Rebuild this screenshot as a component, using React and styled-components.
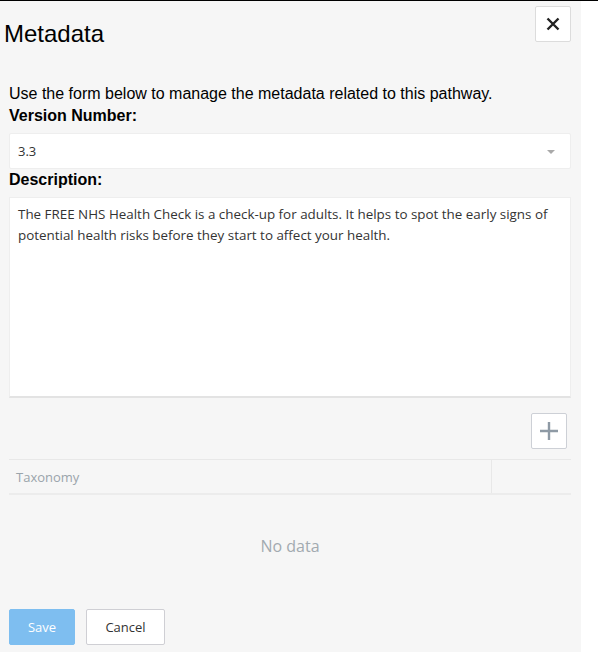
import React from 'react';
import styled, { createGlobalStyle } from 'styled-components';

const GlobalStyle = createGlobalStyle`
  html, body {
    margin: 0;
    padding: 0;
    background: #ffffff;
  }
  * {
    box-sizing: border-box;
  }
`;

const Page = styled.div`
  border-top: 1px solid #000;
  width: 598px;
  height: 652px;
  overflow: hidden;
`;

const Panel = styled.div`
  width: 581px;
  height: 651px;
  background: #f6f6f6;
  padding: 0 10px 0 9px;
  display: flex;
  flex-direction: column;
`;

const Header = styled.div`
  display: flex;
  justify-content: space-between;
  align-items: flex-start;
  margin-left: -5px;
`;

const Title = styled.h1`
  margin: 19px 0 0;
  font-family: "Liberation Sans", Arial, sans-serif;
  font-size: 24px;
  font-weight: normal;
  line-height: 28px;
  color: #000;
`;

const IconButton = styled.button`
  width: ${(p) => p.size}px;
  height: ${(p) => p.size}px;
  margin-top: ${(p) => p.top}px;
  padding: 0;
  background: #fff;
  border: 1px solid ${(p) => p.border};
  border-radius: 2px;
  display: flex;
  align-items: center;
  justify-content: center;
  cursor: pointer;
`;

const Intro = styled.p`
  margin: 35px 0 0;
  font-family: "Liberation Sans", Arial, sans-serif;
  font-size: 16px;
  line-height: 22px;
  color: #000;
`;

const Label = styled.label`
  display: block;
  margin-bottom: 6px;
  font-family: "Liberation Sans", Arial, sans-serif;
  font-size: 16px;
  font-weight: bold;
  line-height: 22px;
  color: #000;
`;

const Select = styled.div`
  height: 36px;
  background: #fff;
  border: 1px solid #eeeeee;
  border-radius: 2px;
  display: flex;
  align-items: center;
  justify-content: space-between;
  padding: 0 15px 0 8px;
  font-family: "Open Sans", "Noto Sans", sans-serif;
  font-size: 13px;
  color: #333;
`;

const Caret = styled.span`
  width: 0;
  height: 0;
  border-left: 4px solid transparent;
  border-right: 4px solid transparent;
  border-top: 4px solid #a9a9a9;
  margin-top: 2px;
`;

const TextArea = styled.div`
  height: 201px;
  background: #fff;
  border: 1px solid #eeeeee;
  border-bottom: 2px solid #e3e3e3;
  padding: 6px 8px;
  font-family: "Open Sans", "Noto Sans", sans-serif;
  font-size: 13.4px;
  line-height: 21px;
  color: #333;
`;

const Toolbar = styled.div`
  display: flex;
  justify-content: flex-end;
  padding-right: 4px;
  margin-top: 15px;
`;

const Table = styled.div`
  margin-top: 10px;
  border-top: 1px solid #e8e8e8;
`;

const HeadRow = styled.div`
  display: grid;
  grid-template-columns: 482px 1fr;
  height: 35px;
  border-bottom: 2px solid #ececec;
`;

const HeadCell = styled.div`
  display: flex;
  align-items: center;
  padding-left: 7px;
  font-family: "Open Sans", "Noto Sans", sans-serif;
  font-size: 13px;
  color: #9aa4ab;
  & + & {
    border-left: 1px solid #e8e8e8;
  }
`;

const Empty = styled.div`
  height: 104px;
  display: flex;
  align-items: center;
  justify-content: center;
  padding-bottom: 2px;
  font-family: "Open Sans", "Noto Sans", sans-serif;
  font-size: 16px;
  color: #a2aab0;
`;

const Actions = styled.div`
  display: flex;
  gap: 11px;
  margin-top: 10px;
`;

const Button = styled.button`
  height: 36px;
  width: ${(p) => p.w}px;
  padding: 0;
  border-radius: 2px;
  font-family: "Open Sans", "Noto Sans", sans-serif;
  font-size: 13px;
  background: ${(p) => (p.primary ? '#7ebef0' : '#fff')};
  color: ${(p) => (p.primary ? '#fff' : '#333')};
  border: 1px solid ${(p) => (p.primary ? '#7ebef0' : '#cfcfd4')};
  cursor: pointer;
`;

export default function App() {
  return (
    <>
      <GlobalStyle />
      <Page>
        <Panel>
          <Header>
            <Title>Metadata</Title>
            <IconButton size={36} top={5} border="#dcdcdc" aria-label="Close">
              <svg width="14" height="14" viewBox="0 0 14 14">
                <path d="M1.5 1.5 L12.5 12.5 M12.5 1.5 L1.5 12.5" stroke="#222" strokeWidth="2.4" />
              </svg>
            </IconButton>
          </Header>
          <Intro>Use the form below to manage the metadata related to this pathway.</Intro>
          <Label>Version Number:</Label>
          <Select>
            <span>3.3</span>
            <Caret />
          </Select>
          <Label as="div">Description:</Label>
          <TextArea>
            The FREE NHS Health Check is a check-up for adults. It helps to spot the early signs of
            potential health risks before they start to affect your health.
          </TextArea>
          <Toolbar>
            <IconButton size={36} top={0} border="#cdd0d6" aria-label="Add">
              <svg width="20" height="20" viewBox="0 0 20 20">
                <path d="M1 10 H19 M10 1 V19" stroke="#8e9aa5" strokeWidth="2.4" />
              </svg>
            </IconButton>
          </Toolbar>
          <Table>
            <HeadRow>
              <HeadCell>Taxonomy</HeadCell>
              <HeadCell />
            </HeadRow>
            <Empty>No data</Empty>
          </Table>
          <Actions>
            <Button primary w={66}>Save</Button>
            <Button w={79}>Cancel</Button>
          </Actions>
        </Panel>
      </Page>
    </>
  );
}
